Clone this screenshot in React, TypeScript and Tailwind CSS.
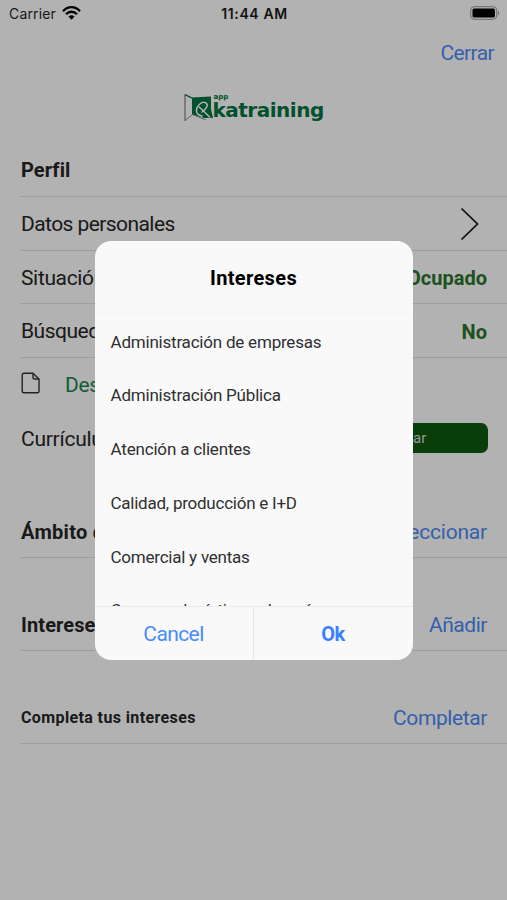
import React, { useState } from 'react';

interface Row {
  label: string;
  action: string;
  labelClass: string;
  actionClass: string;
  rowClass: string;
}

const sections: Row[] = [
  { label: 'Ámbito de interés', action: 'Seleccionar', labelClass: 'text-[20px] tracking-[0.3px]', actionClass: 'tracking-[-0.2px]', rowClass: 'h-[92px] pb-[13px]' },
  { label: 'Intereses', action: 'Añadir', labelClass: 'text-[20px] tracking-[0.1px]', actionClass: 'tracking-[-0.45px]', rowClass: 'h-[93px] pb-[13px]' },
  { label: 'Completa tus intereses', action: 'Completar', labelClass: 'text-[16px] tracking-[0.38px]', actionClass: 'tracking-[-0.4px]', rowClass: 'h-[93px] pb-[13px]' },
];

const interests = [
  { name: 'Administración de empresas', tracking: 'tracking-[-0.21px]' },
  { name: 'Administración Pública', tracking: 'tracking-[-0.2px]' },
  { name: 'Atención a clientes', tracking: 'tracking-[-0.18px]' },
  { name: 'Calidad, producción e I+D', tracking: 'tracking-[-0.24px]' },
  { name: 'Comercial y ventas', tracking: 'tracking-[-0.23px]' },
  { name: 'Compras, logística y almacén', tracking: 'tracking-[-0.4px]' },
];

const StatusBar: React.FC = () => (
  <div className="grid h-[27px] grid-cols-3 items-center pl-[9px] pr-[7px] font-[Inter] text-[14px] text-black">
    <div className="flex items-center gap-[6px]">
      <span className="tracking-[0.15px] text-[#262626]">Carrier</span>
      <svg className="mb-0.5" width="19" height="14" viewBox="0 0 19 14">
        <g fill="none" stroke="#000" strokeWidth="2.3">
          <path d="M1 5.2C6 -.2 13 -.2 18 5.2" />
          <path d="M4 8.2C7.2 4.9 11.8 4.9 15 8.2" />
        </g>
        <path d="M6.5 10.6Q9.5 8 12.5 10.6L9.5 13.7z" />
      </svg>
    </div>
    <span className="text-center font-semibold tracking-[0.6px] text-[#1a1a1a]">11:44 AM</span>
    <svg className="mb-0.5 justify-self-end" width="30" height="14" viewBox="0 0 30 14">
      <rect x=".7" y=".7" width="26" height="12.6" rx="3.5" fill="none" stroke="#999" />
      <rect x="2.5" y="2.5" width="22.4" height="9" rx="1.5" />
      <path d="M28 4.5q2 2.5 0 5z" fill="#888" />
    </svg>
  </div>
);

const Logo: React.FC = () => (
  <div className="flex h-7 w-[140px] text-[#007540]">
    <svg className="shrink-0" width="29" height="28" viewBox="0 0 29 28">
      <path d="M1 1L8.5 4.5M8.5 20.5L1 26.5" fill="none" stroke="#888" strokeWidth=".9" />
      <path d="M1 .5V27" stroke="#666" strokeWidth="1" />
      <path d="M1 .5L8 4" stroke="#007540" strokeWidth="1.2" />
      <path d="M8 3.5L27 2.5V15L29 24H20L8 20.5z" fill="currentColor" />
      <path d="M8.5 20.5L22 26" fill="none" stroke="#888" strokeWidth=".9" />
      <g fill="none" stroke="#fff" strokeWidth="1.5" strokeLinejoin="round">
        <path d="M13.5 20C11 16 13 12 17 9C20 7 24 9 23 12.5C22 15 19.5 17 17.5 18.5" />
        <path d="M14.5 12.5L18.5 16L26 23.5" />
        <path d="M13.5 20L18.5 22.5" />
      </g>
    </svg>
    <div className="flex w-28 flex-col font-['DejaVu_Sans']">
      <span className="h-[7px] pl-px text-[7px] leading-[7px] font-bold">app</span>
      <span className="h-5 text-[20px] leading-[19px] font-bold tracking-[-0.5px]">katraining</span>
    </div>
  </div>
);

export default function App() {
  const [open, setOpen] = useState(true);

  return (
    <div className="relative h-[900px] w-[507px] overflow-hidden bg-white font-[Roboto] text-[#262626]">
      <StatusBar />

      <div className="flex h-[53px] items-center justify-end pr-[13px] text-[21px] text-[#4d8af5]">
        <button className="pt-px tracking-[-0.6px]">Cerrar</button>
      </div>

      <div className="flex h-[63px] justify-center pt-[14px]">
        <Logo />
      </div>

      {/* Profile */}
      <div className="pl-5 text-[21px]">
        <div className="flex h-[54px] items-center border-b border-[#e2e2e2] pl-px text-[20px] font-bold tracking-[0.1px]">Perfil</div>
        <div className="flex h-[54px] items-center justify-between border-b border-[#e2e2e2] pr-[27px] pl-px">
          <span className="pt-0.5 tracking-[-0.57px]">Datos personales</span>
          <svg width="20" height="34" viewBox="0 0 20 34" fill="none" stroke="#111" strokeWidth="1.7">
            <path d="M1.5 1.5L17.5 17L1.5 32.5" />
          </svg>
        </div>
        <div className="flex h-[53px] items-center justify-between border-b border-[#e2e2e2] pr-5 pl-px">
          <span className="pt-1 tracking-[-0.35px]">Situación</span>
          <span className="pt-0.5 text-[20px] font-bold text-[#2a752b]">Ocupado</span>
        </div>
        <div className="flex h-[54px] items-center justify-between border-b border-[#e2e2e2] pr-5 pl-px">
          <span className="pt-0.5 tracking-[-0.5px]">Búsqueda</span>
          <span className="pt-0.5 text-[20px] font-bold text-[#2a752b]">No</span>
        </div>
        <div className="flex h-[54px] items-center gap-6">
          <svg className="mb-1" width="21" height="22" viewBox="0 0 21 22" fill="none" stroke="#333" strokeWidth="1.4" strokeLinejoin="round">
            <path d="M13 1.2H4Q2.2 1.2 2.2 3V19Q2.2 20.8 4 20.8H17.2Q19 20.8 19 19V7z" />
            <path d="M13 1.2V5.2Q13 7 14.8 7H19" />
          </svg>
          <span className="pt-0.5 tracking-[-0.3px] text-[#188451]">Desc</span>
        </div>
        <div className="flex h-[54px] items-center justify-between pr-[19px] pl-px">
          <span className="pt-0.5 tracking-[-0.25px]">Currículum</span>
          <button className="mb-0.5 h-[30px] w-[180px] rounded-[7px] bg-[#0e580e] pt-px text-[15px] text-[#d0dcd0]">Adjuntar</button>
        </div>

        {sections.map((s) => (
          <div key={s.label} className={`flex items-end justify-between border-b border-[#e2e2e2] pr-5 pl-px ${s.rowClass}`}>
            <span className={`leading-6 font-bold ${s.labelClass}`}>{s.label}</span>
            <button className={`leading-6 text-[#4d8af5] ${s.actionClass}`}>{s.action}</button>
          </div>
        ))}
      </div>

      {/* Interest picker */}
      {open && (
        <div className="absolute inset-0 flex justify-center bg-black/30 pt-[241px]">
          <div className="flex h-[419px] w-[318px] flex-col overflow-hidden rounded-2xl bg-[#f9f9f9]">
            <h2 className="flex h-[73px] shrink-0 items-center justify-center border-b border-[#f4f4f4] pt-0.5 text-[20px] font-bold tracking-[0.35px] text-black">
              Intereses
            </h2>
            <div className="min-h-0 flex-1 overflow-hidden pt-[1.5px]">
              {interests.map((i) => (
                <div key={i.name} className={`flex h-[53.75px] items-center px-4 text-[17px] text-[#303030] ${i.tracking}`}>
                  {i.name}
                </div>
              ))}
            </div>
            <div className="grid h-[54px] shrink-0 grid-cols-2 border-t border-[#ececec] text-[21px] text-[#3880ff]">
              <button className="border-r border-[#e6e6e6] pt-0.5 tracking-[-0.6px] text-[#4a8bff]" onClick={() => setOpen(false)}>Cancel</button>
              <button className="text-[20px] font-bold tracking-[-0.4px]" onClick={() => setOpen(false)}>Ok</button>
            </div>
          </div>
        </div>
      )}
    </div>
  );
}
